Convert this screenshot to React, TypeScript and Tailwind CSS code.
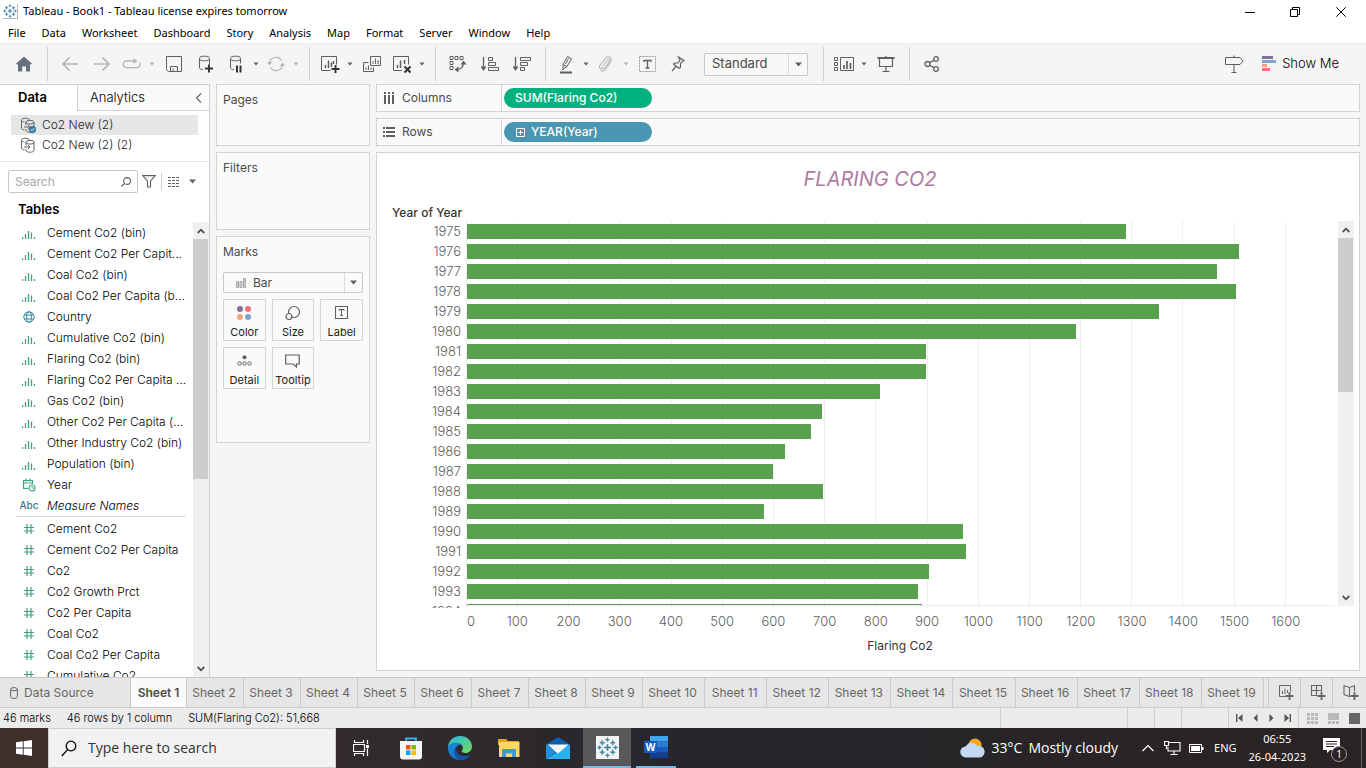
import type { ReactNode } from 'react';

const ui = "font-['Inter','Liberation_Sans',sans-serif]";
const win = "font-['Noto_Sans','Open_Sans',sans-serif]";

const menus = ['File', 'Data', 'Worksheet', 'Dashboard', 'Story', 'Analysis', 'Map', 'Format', 'Server', 'Window', 'Help'];

type FieldKind = 'bin' | 'geo' | 'date' | 'abc' | 'num';

const dimensions: { kind: FieldKind; name: string }[] = [
  { kind: 'bin', name: 'Cement Co2 (bin)' },
  { kind: 'bin', name: 'Cement Co2 Per Capit...' },
  { kind: 'bin', name: 'Coal Co2 (bin)' },
  { kind: 'bin', name: 'Coal Co2 Per Capita (b...' },
  { kind: 'geo', name: 'Country' },
  { kind: 'bin', name: 'Cumulative Co2 (bin)' },
  { kind: 'bin', name: 'Flaring Co2 (bin)' },
  { kind: 'bin', name: 'Flaring Co2 Per Capita ...' },
  { kind: 'bin', name: 'Gas Co2 (bin)' },
  { kind: 'bin', name: 'Other Co2 Per Capita (...' },
  { kind: 'bin', name: 'Other Industry Co2 (bin)' },
  { kind: 'bin', name: 'Population (bin)' },
  { kind: 'date', name: 'Year' },
  { kind: 'abc', name: 'Measure Names' },
];

const measures = ['Cement Co2', 'Cement Co2 Per Capita', 'Co2', 'Co2 Growth Prct', 'Co2 Per Capita', 'Coal Co2', 'Coal Co2 Per Capita', 'Cumulative Co2'];

const AXIS_MAX = 1694;

const flaring = [
  [1975, 1287], [1976, 1508], [1977, 1465], [1978, 1502], [1979, 1352], [1980, 1190], [1981, 897],
  [1982, 897], [1983, 807], [1984, 693], [1985, 672], [1986, 621], [1987, 598], [1988, 695],
  [1989, 580], [1990, 969], [1991, 975], [1992, 902], [1993, 881], [1994, 889],
];

const ticks = Array.from({ length: 16 }, (_, i) => (i + 1) * 100);
const sheets = Array.from({ length: 18 }, (_, i) => i + 2);

function Svg({ w = 20, h = 20, children, className = '' }: { w?: number; h?: number; children: ReactNode; className?: string }) {
  return (
    <svg width={w} height={h} viewBox={`0 0 ${w} ${h}`} fill="none" stroke="currentColor" className={`shrink-0 ${className}`} aria-hidden="true">
      {children}
    </svg>
  );
}

function Tool({ label, wide, off, children }: { label: string; wide?: boolean; off?: boolean; children: ReactNode }) {
  return (
    <button aria-label={label} className={`flex h-8 shrink-0 items-center justify-center ${wide ? 'w-8' : 'w-7'} ${off ? 'text-[#b5b5b5]' : 'text-[#5f5f5f]'}`}>
      {children}
    </button>
  );
}

function Caret({ label, off }: { label: string; off?: boolean }) {
  return (
    <button aria-label={label} className={`flex h-8 w-3 shrink-0 items-center justify-center ${off ? 'text-[#b5b5b5]' : 'text-[#5f5f5f]'}`}>
      <Svg w={6} h={4}><path d="M.5 .5h5L3 3.500z" fill="currentColor" stroke="none" /></Svg>
    </button>
  );
}

function Divider() {
  return <span className="ml-[7px] mr-1.5 h-[34px] w-px shrink-0 bg-[#cfcfcf]" />;
}

function TableauMark({ size }: { size: number }) {
  const plus = (x: number, y: number, r: number, c: string, w: number) => (
    <path key={`${x}-${y}`} d={`M${x - r} ${y}h${2 * r}M${x} ${y - r}v${2 * r}`} stroke={c} strokeWidth={w} />
  );
  return (
    <svg width={size} height={size} viewBox="0 0 24 24" fill="none" className="shrink-0" aria-hidden="true">
      {plus(12, 12, 3.8, '#2f7fa3', 1.8)}
      {plus(6, 6.5, 2.8, '#3f8bad', 1.7)}
      {plus(18, 6.5, 2.8, '#3f8bad', 1.7)}
      {plus(6, 17.5, 2.8, '#3f8bad', 1.7)}
      {plus(18, 17.5, 2.8, '#3f8bad', 1.7)}
      {plus(12, 3, 2.4, '#3f8bad', 1.6)}
      {plus(12, 21, 2.4, '#3f8bad', 1.6)}
      {plus(2.8, 12, 2.4, '#3f8bad', 1.6)}
      {plus(21.2, 12, 2.4, '#3f8bad', 1.6)}
    </svg>
  );
}

function FieldIcon({ kind }: { kind: FieldKind }) {
  if (kind === 'bin')
    return (
      <Svg w={14} h={12} className="text-[#3fa37f]">
        <path d="M.5 10v2M3.500 7v5M6.500 4v8M9.500 5.500V12M12.500 10v2" strokeWidth="1.300" />
      </Svg>
    );
  if (kind === 'geo')
    return (
      <Svg w={12} h={12} className="text-[#3a87a3]">
        <circle cx="6" cy="6" r="5.2" />
        <ellipse cx="6" cy="6" rx="2.400" ry="5.200" />
        <path d="M1.500 4h9M1.500 8h9" />
      </Svg>
    );
  if (kind === 'date')
    return (
      <Svg w={14} h={14} className="text-[#3fa37f]">
        <path d="M6 10.500H1.500V2.500h9V6M1.500 5h9M4 .5v3M8 .5v3" strokeWidth="1.200" />
        <circle cx="10" cy="10" r="3" strokeWidth="1.200" />
        <path d="M10 8.500V10h1.500" />
      </Svg>
    );
  if (kind === 'abc') return <span className="text-[10px] font-medium text-[#3c7a94]">Abc</span>;
  return (
    <Svg w={12} h={12} className="text-[#3fa37f]">
      <path d="M4 1v10M8 1v10M1 4.500h10M1 8h10" strokeWidth="1.200" />
    </Svg>
  );
}

function Field({ kind, name }: { kind: FieldKind; name: string }) {
  return (
    <li className="flex h-[21px] items-center">
      <span className="ml-4 flex w-[26px] justify-center">
        <FieldIcon kind={kind} />
      </span>
      <span className={`ml-[5px] whitespace-nowrap text-xs font-light text-black ${kind === 'abc' ? 'italic' : ''}`}>{name}</span>
    </li>
  );
}

function ScrollBar({ thumb }: { thumb: string }) {
  return (
    <div className="flex w-4 shrink-0 flex-col bg-[#f0f0f0] text-[#505050]">
      <button aria-label="Scroll up" className="flex h-[17px] w-[15px] shrink-0 items-center justify-center">
        <Svg w={8} h={6}><path d="M.7 5 4 1.700 7.300 5" strokeWidth="1.800" /></Svg>
      </button>
      <div className="min-h-0 flex-1">
        <div className={`w-[15px] bg-[#cdcdcd] ${thumb}`} />
      </div>
      <button aria-label="Scroll down" className="flex h-[17px] w-[15px] shrink-0 items-center justify-center">
        <Svg w={8} h={6}><path d="M.7 1 4 4.300 7.300 1" strokeWidth="1.800" /></Svg>
      </button>
    </div>
  );
}

function DataSourceIcon({ active }: { active?: boolean }) {
  return (
    <Svg w={17} h={17} className="text-[#666]">
      <path d="M1.500 3.200v8c0 .8 1.500 1.500 3 1.600M1.500 3.200C1.500 2 3.300 1.200 5.500 1.200s4 .8 4 2M1.500 3.200c0 1 1.500 1.700 3 1.900" />
      <ellipse cx="10" cy="5.200" rx="4" ry="1.900" />
      <path d="M6 5.200v3M6 12v1.300c0 1.100 1.800 1.900 4 1.900s4-.8 4-1.900V5.200M4 10h6M8 8l2 2-2 2" />
      {active && (
        <>
          <circle cx="12.500" cy="12.500" r="3.400" fill="#2f7fa3" stroke="#2f7fa3" strokeWidth=".5" />
          <path d="m10.900 12.500 1.200 1.200 2-2.400" stroke="#fff" strokeWidth=".9" />
        </>
      )}
    </Svg>
  );
}

function TitleBar() {
  return (
    <header className={`bg-white ${win}`}>
      <div className="flex h-[23px] items-center">
        <span className="ml-[3px] flex size-[15px] items-center justify-center border-b border-r border-[#b8b8b8]">
          <TableauMark size={14} />
        </span>
        <h1 className="ml-[5px] flex-1 text-[11px] text-black">Tableau - Book1 - Tableau license expires tomorrow</h1>
        <button aria-label="Minimize" className="flex w-[46px] justify-center text-black"><Svg w={10} h={10}><path d="M0 5.500h10" /></Svg></button>
        <button aria-label="Restore" className="flex w-[44px] justify-center text-black"><Svg w={10} h={10}><path d="M.5 2.500h7v7h-7zM2.500 2.500v-2h7v7h-2" /></Svg></button>
        <button aria-label="Close" className="mr-0.5 flex w-[47px] justify-center text-black"><Svg w={10} h={10}><path d="m.3.3 9.400 9.400M9.700.3.3 9.700" /></Svg></button>
      </div>
      <nav className="flex h-5 items-center gap-4 pl-2 text-[11px] text-black">
        {menus.map((m) => <button key={m}>{m}</button>)}
      </nav>
    </header>
  );
}

function Toolbar() {
  return (
    <div className={`flex h-[41px] items-center border-t border-[#ececec] bg-[#f5f5f5] ${ui}`}>
      <button aria-label="Home" className="flex w-10 shrink-0 justify-center pl-2 text-[#66727f]">
        <Svg w={18} h={16}><path d="M9 .5 17.500 8.300H15V15.500h-4v-5H7.200v5H3V8.300H.5z" fill="currentColor" stroke="none" /></Svg>
      </button>
      <Divider />
      <Tool label="Undo" wide off><Svg w={18} h={16}><path d="M17 8H2M8.500 1.500 2 8l6.500 6.500" strokeWidth="1.700" /></Svg></Tool>
      <Tool label="Redo" wide off><Svg w={18} h={16}><path d="M1 8h15M9.500 1.500 16 8l-6.500 6.500" strokeWidth="1.700" /></Svg></Tool>
      <Tool label="Replay" off><Svg w={20} h={12}><path d="M12.500 3H4.500a3.300 3.300 0 0 0 0 6.600h10.500a3.300 3.300 0 0 0 2.700-5" strokeWidth="1.300" /><path d="m11.500.3 4 2.700-4 2.700z" fill="currentColor" stroke="none" /></Svg></Tool>
      <Caret label="Replay options" off />
      <Tool label="Save" wide><Svg w={16} h={16}><path d="M.5.5h15v15H2.500l-2-2zM4.500 15.500v-5h7v5M7 15.500v-3" /></Svg></Tool>
      <Tool label="New data source" wide>
        <Svg w={16} h={18}><ellipse cx="6.500" cy="3.500" rx="5" ry="2.300" /><path d="M1.500 3.500v9.300c0 1 1.500 1.700 3.500 1.900M11.500 3.500v6" /><path d="M11 9.500v8M7 13.500h8" stroke="#333" strokeWidth="1.900" /></Svg>
      </Tool>
      <Tool label="Pause auto updates">
        <Svg w={16} h={18}><ellipse cx="7.500" cy="3.500" rx="5" ry="2.300" /><path d="M2.500 3.500v9.300c0 1 1.500 1.700 3.500 1.900M12.500 3.500v5" /><path d="M9 10.500v7M12.500 10.500v7" stroke="#333" strokeWidth="2" /></Svg>
      </Tool>
      <Caret label="Pause options" />
      <Tool label="Refresh" off>
        <Svg w={18} h={16}><path d="M2.500 7A6.500 6.500 0 0 1 14.500 4.500M15.500 9A6.500 6.500 0 0 1 3.500 11.500" strokeWidth="1.200" /><path d="M0 6h5L2.500 9.500zM13 10h5l-2.500-3.500z" fill="currentColor" stroke="none" /></Svg>
      </Tool>
      <Caret label="Refresh options" off />
      <Divider />
      <Tool label="New worksheet">
        <Svg w={20} h={19}><path d="M10.500 15.500H1.500V1.500h15v8" /><path d="M5.500 10v3M8.500 5.500V13M11.500 7.500V12M13.500 6v3" strokeWidth="1.500" /><path d="M15.500 10v8M11.500 14h8" stroke="#333" strokeWidth="1.900" /></Svg>
      </Tool>
      <Caret label="New worksheet options" />
      <Tool label="Duplicate" wide>
        <Svg w={18} h={17}><path d="M7.500.5h10v9h-10zM5.500 6.500h-5v9h10v-4" /><path d="M10 5v3M12.500 2.500V8M15 4v4M3 11.500v2.500M5.500 9.500V14M8 11.500V14" /></Svg>
      </Tool>
      <Tool label="Clear sheet">
        <Svg w={20} h={19}><path d="M10 15.500H1.500V1.500h15v8" /><path d="M5.500 10v3M8.500 5.500V13M12.500 5v4" strokeWidth="1.500" /><path d="m12.500 11.500 6 6M18.500 11.500l-6 6" stroke="#333" strokeWidth="2" /></Svg>
      </Tool>
      <Caret label="Clear options" />
      <Divider />
      <Tool label="Swap rows and columns" wide>
        <Svg w={18} h={18}><path d="M1 1.500h3v3H1zM6 1.500h3v3H6zM11 1.500h3v3h-3zM1 6.500h3v3H1zM1 11.500h3v3H1z" /><path d="M7.500 14.500c4.500 0 7-2.500 7-7" strokeWidth="1.200" /><path d="m9.500 11.500-4 3 4 3zM11.500 9.500l3-4 3 4z" fill="currentColor" stroke="none" /></Svg>
      </Tool>
      <Tool label="Sort ascending" wide>
        <Svg w={20} h={16}><path d="M3.500 1v12" strokeWidth="1.300" /><path d="M.5 10.500h6l-3 4.500z" fill="currentColor" stroke="none" /><path d="M8.500 1.500h4v3h-4zM8.500 6.500h7v3h-7zM8.500 11.500h10v3h-10z" /></Svg>
      </Tool>
      <Tool label="Sort descending" wide>
        <Svg w={20} h={16}><path d="M3.500 1v12" strokeWidth="1.300" /><path d="M.5 10.500h6l-3 4.500z" fill="currentColor" stroke="none" /><path d="M8.500 1.500h10v3h-10zM8.500 6.500h7v3h-7zM8.500 11.500h4v3h-4z" /></Svg>
      </Tool>
      <Divider />
      <Tool label="Highlight">
        <Svg w={14} h={19}><path d="M4 9.500 8.500 1.500l4 2.200L8 11.500 4.200 14zM4 9.500l4 2M4.500 14 3 15M6.500 9l3-5.500" /><path d="M1 17.500h12" strokeWidth="2" /></Svg>
      </Tool>
      <Caret label="Highlight options" />
      <Tool label="Group members" off>
        <Svg w={14} h={16}><path d="M4 10 8.300 4c1-1.300 2.800-.2 2 1.300L5.800 12c-1.200 1.500-3 .3-2.200-1.300M3.200 12.500c-2.500 1-3.500-1.500-2-3.500L6.500 2.300c2-2.700 7-1.300 5.500 2.500l-4.500 7.500c-1.500 2.500-4.500 3.500-6 1.500" strokeWidth="1.100" /></Svg>
      </Tool>
      <Caret label="Group options" off />
      <Tool label="Show mark labels" wide>
        <Svg w={18} h={16}><path d="M.5.5h16v15H.5z" strokeDasharray="2 1" stroke="#999" /><path d="M5 6V4.500h7V6M8.500 4.500v7.500M6.500 12h4" strokeWidth="1.300" /></Svg>
      </Tool>
      <Tool label="Fix axes">
        <Svg w={14} h={16}><path d="m7.500 1 5.500 3.500-1.500.5L9.500 8v3.500l-1.500.8L2.500 8 4 7h3l2-3zM5 10.500 1 15" strokeWidth="1.200" /></Svg>
      </Tool>
      <div className="ml-3 flex h-[23px] w-[104px] shrink-0 items-center rounded-xs border border-[#c9c9c9] bg-[#f7f7f7] text-[#5f5f5f]">
        <select aria-label="Fit" className="h-full min-w-0 flex-1 appearance-none pl-[7px] text-[13px] text-[#4a4a4a] outline-none">
          <option>Standard</option>
        </select>
        <span className="flex h-full w-[19px] items-center justify-center border-l border-[#dcdcdc]">
          <Svg w={7} h={5}><path d="M0 .5h7L3.500 4.500z" fill="currentColor" stroke="none" /></Svg>
        </span>
      </div>
      <span className="w-2 shrink-0" />
      <Divider />
      <Tool label="Show or hide cards">
        <Svg w={20} h={15}><path d="M.5.5h3v3h-3zM.5 5.500h3v3h-3zM.5 10.500h3v3h-3zM6.500.5h13v13h-13z" /><path d="M10 8v4M13 4v8M16.500 6v6" strokeWidth="1.700" /></Svg>
      </Tool>
      <Caret label="Card options" />
      <Tool label="Presentation mode" wide>
        <Svg w={18} h={16}><path d="M.5 2h17" strokeWidth="2" /><path d="M2.500 2v8.500h13V2M9 0v1M9 10.500v5M5.500 15.500h7" strokeWidth="1.200" /></Svg>
      </Tool>
      <Divider />
      <Tool label="Share" wide>
        <Svg w={16} h={16}><circle cx="3.500" cy="8" r="2.500" strokeWidth="1.300" /><circle cx="12" cy="3" r="2.300" strokeWidth="1.300" /><circle cx="12" cy="13" r="2.300" strokeWidth="1.300" /><path d="m5.700 6.700 4.300-2.600M5.700 9.300l4.300 2.600" strokeWidth="1.300" /></Svg>
      </Tool>
      <span className="flex-1" />
      <Tool label="Guide"><Svg w={19} h={18}><path d="M.5 2.500h14.500l3 3.500-3 3.500H.5zM9 .5v2M9 9.500v8M6.500 17.500h5" /></Svg></Tool>
      <button className="mr-[27px] ml-3.5 flex shrink-0 items-center gap-1.5 text-[13px] font-light text-black">
        <Svg w={14} h={16}><g stroke="none"><path d="M0 0h11v3H0z" fill="#85719a" /><path d="M0 4h14v3H0z" fill="#7da2cc" /><path d="M0 8h5v3H0z" fill="#f2a57c" /><path d="M0 12h8v3H0z" fill="#f8707f" /></g></Svg>
        Show Me
      </button>
    </div>
  );
}

function DataPane() {
  return (
    <aside className="flex w-[210px] shrink-0 flex-col border-r border-t border-[#cfcfcf] bg-white">
      <div className="flex h-[26px] shrink-0 text-[13px]">
        <button className="w-[77px] pr-3 font-semibold text-black">Data</button>
        <div className="flex flex-1 items-center justify-between border-b border-l border-[#d0d0d0] bg-[#fafafa] pl-3 pr-1.5">
          <button className="font-light text-black">Analytics</button>
          <button aria-label="Collapse pane" className="text-[#666]"><Svg w={8} h={10}><path d="M6 .5 1.500 5 6 9.500" strokeWidth="1.200" /></Svg></button>
        </div>
      </div>
      <ul className="h-[51px] shrink-0 border-b border-[#e2e2e2] pt-1 text-xs font-light text-[#222]">
        <li className="ml-[11px] mr-[11px] flex h-5 items-center gap-[5px] bg-[#e6e6e6] pl-[9px]"><DataSourceIcon active />Co2 New (2)</li>
        <li className="ml-[11px] mr-[11px] flex h-5 items-center gap-[5px] pl-[9px]"><DataSourceIcon />Co2 New (2) (2)</li>
      </ul>
      <div className="mt-2 flex h-[23px] shrink-0 items-center pl-2 text-[#5f5f5f]">
        <label className="flex h-full w-[130px] items-center rounded-xs border border-[#c9c9c9] pl-1.5 pr-1.5">
          <input aria-label="Search fields" placeholder="Search" className="min-w-0 flex-1 text-xs outline-none placeholder:text-[#a8a8a8]" />
          <Svg w={10} h={10}><circle cx="6" cy="4" r="3.400" strokeWidth="1.100" /><path d="M3.500 6.500.5 9.500" strokeWidth="1.200" /></Svg>
        </label>
        <button aria-label="Filter fields" className="ml-1"><Svg w={14} h={13}><path d="M.8.6h12.400L8.500 6.200V12h-3V6.200z" strokeWidth="1.100" /></Svg></button>
        <span className="ml-[5px] h-[18px] w-px bg-[#d0d0d0]" />
        <button aria-label="View fields as list" className="ml-1.5"><Svg w={12} h={10}><path d="M0 .5h12M0 3.500h12M0 6.500h12M0 9.500h12" strokeDasharray="3 1" /></Svg></button>
        <button aria-label="Field options" className="ml-[9px]"><Svg w={7} h={5}><path d="M0 .5h7L3.500 4.500z" fill="currentColor" stroke="none" /></Svg></button>
      </div>
      <h2 className="flex h-[29px] shrink-0 items-center pl-[18px] pt-1 text-[13px] font-semibold text-black">Tables</h2>
      <div className="flex min-h-0 flex-1">
        <div className="min-w-0 flex-1 overflow-hidden">
          <ul>{dimensions.map((d) => <Field key={d.name} {...d} />)}</ul>
          <hr className="ml-4 mr-[7px] border-[#d9d9d9]" />
          <ul className="pt-px">{measures.map((m) => <Field key={m} kind="num" name={m} />)}</ul>
        </div>
        <ScrollBar thumb="h-[57%]" />
      </div>
    </aside>
  );
}

function MarkButton({ label, children }: { label: string; children: ReactNode }) {
  return (
    <button className="flex h-[42px] flex-col items-center justify-end gap-px border border-[#d4d4d4] text-[11px] text-[#222]">
      <span className="flex h-[23px] items-center text-[#5f5f5f]">{children}</span>
      {label}
    </button>
  );
}

function Cards() {
  const card = 'border border-[#d4d4d4] bg-[#fafafa] px-1.5 text-xs text-[#4b4b4b]';
  return (
    <div className="flex w-[154px] shrink-0 flex-col gap-1.5">
      <section className={`h-[62px] pt-[7px] ${card}`}><h3>Pages</h3></section>
      <section className={`h-[78px] pt-[7px] ${card}`}><h3>Filters</h3></section>
      <section className={`h-[207px] pt-[7px] ${card}`}>
        <h3>Marks</h3>
        <div className="mt-3 flex h-[21px] items-center rounded-xs border border-[#c9c9c9] pl-3">
          <Svg w={10} h={10} className="text-[#a9a9a9]"><path d="M.5 3.500h2v6h-2zM4 3.500h2v6H4zM7.500.5h2v9h-2z" fill="#d0d0d0" /></Svg>
          <select aria-label="Mark type" className="h-full min-w-0 flex-1 appearance-none pl-[7px] text-xs outline-none"><option>Bar</option></select>
          <span className="flex h-full w-[18px] items-center justify-center border-l border-[#dcdcdc] text-[#5f5f5f]"><Svg w={7} h={5}><path d="M0 .5h7L3.500 4.500z" fill="currentColor" stroke="none" /></Svg></span>
        </div>
        <div className="mt-1.5 grid grid-cols-3 gap-x-1.5 gap-y-1.5">
          <MarkButton label="Color"><Svg w={16} h={16}><g stroke="none"><circle cx="4" cy="4" r="3" fill="#85719a" /><circle cx="12" cy="4" r="3" fill="#f8707f" /><circle cx="4" cy="12" r="3" fill="#f2a57c" /><circle cx="12" cy="12" r="3" fill="#7da2cc" /></g></Svg></MarkButton>
          <MarkButton label="Size"><Svg w={16} h={16}><circle cx="9" cy="7" r="5.500" strokeWidth="1.200" /><circle cx="4" cy="11.500" r="3" fill="#fafafa" strokeWidth="1.200" /></Svg></MarkButton>
          <MarkButton label="Label"><Svg w={14} h={13}><path d="M.5.5h12v12H.5z" strokeWidth="1.100" /><path d="M4 5V3.500h5V5M6.500 3.500v6M5 9.500h3" /></Svg></MarkButton>
          <MarkButton label="Detail"><Svg w={15} h={11}><circle cx="7.500" cy="2.200" r="2" fill="currentColor" stroke="none" /><circle cx="2.500" cy="8.500" r="1.700" /><circle cx="7.500" cy="8.500" r="1.700" /><circle cx="12.500" cy="8.500" r="1.700" /></Svg></MarkButton>
          <MarkButton label="Tooltip"><Svg w={15} h={14}><path d="M.7 1h13.500v9H11.500v3L8 10H.7z" strokeWidth="1.200" /></Svg></MarkButton>
        </div>
      </section>
    </div>
  );
}

function Shelf({ title, icon, children }: { title: string; icon: ReactNode; children: ReactNode }) {
  return (
    <div className="flex h-7 shrink-0 items-center border border-[#d4d4d4] bg-[#fafafa]">
      <div className="flex h-full w-[125px] shrink-0 items-center gap-[7px] border-r border-[#d4d4d4] pl-1.5 text-xs text-[#4b4b4b]">{icon}<h3>{title}</h3></div>
      {children}
    </div>
  );
}

function Chart() {
  const cell = { width: `${(100 / AXIS_MAX) * 100}%` };
  return (
    <section className="flex min-h-0 flex-1 flex-col border border-[#d4d4d4] bg-white pl-[15px] pr-[5px]">
      <h2 className="mt-3 mr-3 ml-1.5 text-center text-xl leading-[28px] text-[#b07aa1] italic">FLARING CO2</h2>
      <h3 className="mt-3 flex h-4 items-center text-xs font-medium text-[#333]">Year of Year</h3>
      <div className="flex min-h-0 flex-1">
        <div className="-mb-0.5 w-[70px] shrink-0 overflow-hidden text-right text-[13px] font-light text-[#5c5c5c]">
          {flaring.map(([year]) => <div key={year} className="h-5 pr-px leading-[21px]">{year}</div>)}
        </div>
        <div className="relative ml-1 mr-1 min-w-0 flex-1 overflow-hidden border-b border-l border-[#ececec]">
          <div className="absolute inset-0 flex">
            {ticks.map((t) => <span key={t} style={cell} className="shrink-0 border-r border-[#f0f0f0]" />)}
          </div>
          <div className="relative">
            {flaring.map(([year, v]) => (
              <div key={year} className="h-5 pt-[3px]">
                <div className="h-[15px] bg-[#59a14f]" style={{ width: `${(v / AXIS_MAX) * 100}%` }} />
              </div>
            ))}
          </div>
        </div>
        <ScrollBar thumb="h-[44%]" />
      </div>
      <div className="mr-5 ml-[74px] flex h-1 shrink-0 overflow-hidden border-l border-[#ececec]">
        {ticks.map((t) => <span key={t} style={cell} className="shrink-0 border-r border-[#f0f0f0]" />)}
      </div>
      <div className="mr-5 ml-[74px] flex h-6 shrink-0 items-center overflow-hidden text-[13px] font-light text-[#5c5c5c]">
        <span style={{ width: `${(50 / AXIS_MAX) * 100}%` }} className="shrink-0 pl-px">0</span>
        {ticks.map((t) => <span key={t} style={cell} className="shrink-0 text-center">{t}</span>)}
      </div>
      <p className="mr-5 ml-[74px] h-9 shrink-0 pt-1 text-center text-xs text-[#333]">Flaring Co2</p>
    </section>
  );
}

function Workspace() {
  return (
    <main className={`flex min-h-0 flex-1 bg-[#f5f5f5] ${ui}`}>
      <DataPane />
      <div className="flex min-w-0 flex-1 gap-1.5 pb-1.5 pl-1.5 pr-1.5">
        <Cards />
        <div className="flex min-w-0 flex-1 flex-col gap-1.5">
          <Shelf title="Columns" icon={<Svg w={12} h={12} className="text-[#5f5f5f]"><path d="M2 0v2M2 3v9M6 0v2M6 3v9M10 0v2M10 3v9" strokeWidth="2" /></Svg>}>
            <button className="ml-0.5 h-5 w-[148px] rounded-full bg-[#00b180] pl-[11px] text-left text-xs font-medium text-white">SUM(Flaring Co2)</button>
          </Shelf>
          <Shelf title="Rows" icon={<Svg w={12} h={12} className="text-[#5f5f5f]"><path d="M0 2h2M3 2h9M0 6h2M3 6h9M0 10h2M3 10h9" strokeWidth="2" /></Svg>}>
            <button className="ml-0.5 flex h-5 w-[148px] items-center gap-1.5 rounded-full bg-[#4996b2] pl-3 text-xs font-medium text-white">
              <Svg w={9} h={9}><path d="M.5.5h8v8h-8zM2 4.500h5M4.500 2v5" /></Svg>YEAR(Year)
            </button>
          </Shelf>
          <Chart />
        </div>
      </div>
    </main>
  );
}

function SheetTabs() {
  return (
    <nav className={`flex h-[31px] shrink-0 border-b border-t border-[#c9c9c9] bg-[#e6e6e6] text-xs text-[#666] ${ui}`}>
      <button className="flex w-[131px] shrink-0 items-center gap-1.5 border-r border-[#c9c9c9] pl-2.5">
        <Svg w={8} h={12}><ellipse cx="4" cy="2.200" rx="3.400" ry="1.600" /><path d="M.6 2.200v7.500c0 1 1.500 1.700 3.400 1.700s3.400-.7 3.400-1.700V2.200" /></Svg>
        Data Source
      </button>
      <button className="w-14 shrink-0 border-r border-[#c9c9c9] bg-[#fafafa] font-semibold text-[#4b4b4b]">Sheet 1</button>
      {sheets.map((n) => (
        <button key={n} className={`whitespace-nowrap border-r border-[#c9c9c9] pr-0.5 ${n < 10 ? 'w-[57px] shrink-0' : 'min-w-0 grow basis-[60px]'}`}>Sheet {n}</button>
      ))}
      <span className="w-[5px] shrink-0 border-r border-[#c9c9c9]" />
      <button aria-label="New worksheet" className="flex w-8 shrink-0 items-center justify-center border-r border-[#c9c9c9] pl-1">
        <Svg w={16} h={15}><path d="M7.500 11.500h-6v-11h11v6" /><path d="M4.500 6v3M7 3.500V9M9.500 5v3" /><path d="M11.500 7v8M7.500 11h8" strokeWidth="1.800" /></Svg>
      </button>
      <button aria-label="New dashboard" className="flex w-8 shrink-0 items-center justify-center border-r border-[#c9c9c9] pl-1">
        <Svg w={16} h={15}><path d="M7.500 10.500h-6v-10h10v6M6.500.5v10M1.500 5.500h10" strokeWidth="1.100" /><path d="M11.500 7v8M7.500 11h8" strokeWidth="1.800" /></Svg>
      </button>
      <button aria-label="New story" className="flex w-[33px] shrink-0 items-center justify-center pl-1">
        <Svg w={16} h={15}><path d="M11.500 6V.8L6.500 2.500 1 .8V9.500l5.500 2V2.500" strokeWidth="1.100" /><path d="M11.500 7v8M7.500 11h8" strokeWidth="1.800" /></Svg>
      </button>
    </nav>
  );
}

function StatusBar() {
  const nav = 'flex w-4 items-center justify-center';
  return (
    <div className={`flex h-5 shrink-0 items-center bg-[#ebebeb] pl-[3px] text-[11px] font-light text-black ${ui}`}>
      <span>46 marks</span>
      <span className="ml-4">46 rows by 1 column</span>
      <span className="ml-4 flex-1">SUM(Flaring Co2): 51,668</span>
      <span className="h-full w-[127px] border-l border-[#cfcfcf]" />
      <span className="h-full w-[27px] border-l border-[#cfcfcf]" />
      <span className="h-full w-[27px] border-l border-[#cfcfcf]" />
      <span className="h-full w-[47px] border-l border-[#cfcfcf]" />
      <div className="flex h-full w-[70px] border-l border-[#cfcfcf] pl-0.5 text-[#555]">
        <button aria-label="First sheet" className={nav}><Svg w={7} h={8}><path d="M.7 0v8" strokeWidth="1.400" /><path d="M6.500 0v8L2 4z" fill="currentColor" stroke="none" /></Svg></button>
        <button aria-label="Previous sheet" className={nav}><Svg w={5} h={8}><path d="M4.500 0v8L.5 4z" fill="currentColor" stroke="none" /></Svg></button>
        <button aria-label="Next sheet" className={nav}><Svg w={5} h={8}><path d="M.5 0v8l4-4z" fill="currentColor" stroke="none" /></Svg></button>
        <button aria-label="Last sheet" className={nav}><Svg w={7} h={8}><path d="M6.300 0v8" strokeWidth="1.400" /><path d="M.5 0v8L5 4z" fill="currentColor" stroke="none" /></Svg></button>
      </div>
      <div className="flex h-full items-center gap-2.5 border-l border-[#cfcfcf] pl-2 pr-1.5">
        <button aria-label="Show sheet sorter"><Svg w={11} h={11} className="text-[#bababa]"><path d="M0 1.500h11M0 5.500h11M0 9.500h11" strokeWidth="3" strokeDasharray="3 1" /></Svg></button>
        <button aria-label="Show filmstrip"><Svg w={11} h={11} className="text-[#bababa]"><path d="M0 3.500h11" strokeWidth="7" /><path d="M0 9.500h11" strokeWidth="3" strokeDasharray="3 1" /></Svg></button>
        <button aria-label="Show tabs"><Svg w={11} h={11} className="text-[#666]"><path d="M0 5.500h11" strokeWidth="11" /></Svg></button>
      </div>
    </div>
  );
}

function TaskApp({ label, children }: { label: string; children: ReactNode }) {
  return <button aria-label={label} className="flex h-full w-[49px] shrink-0 items-center justify-center">{children}</button>;
}

function Taskbar() {
  return (
    <footer className={`flex h-10 shrink-0 items-center bg-linear-to-r from-[#40302b] via-[#26262c] to-[#2a2323] text-white ${win}`}>
      <button aria-label="Start" className="flex w-12 shrink-0 justify-center">
        <Svg w={16} h={16}><path d="M0 2.300 6.800 1.300v6.200H0zM7.700 1.200 16 0v7.500H7.700zM0 8.400h6.800v6.300L0 13.700zM7.700 8.400H16V16l-8.300-1.200z" fill="currentColor" stroke="none" /></Svg>
      </button>
      <label className="mr-px flex h-full w-72 shrink-0 items-center gap-[11px] border border-[#cfcfcf] bg-[#f2f2f2] pl-3 text-black">
        <Svg w={16} h={17}><circle cx="10" cy="6" r="4.800" strokeWidth="1.300" /><path d="M6.600 9.600.8 16" strokeWidth="1.300" /></Svg>
        <input aria-label="Type here to search" placeholder="Type here to search" className="min-w-0 flex-1 font-['Open_Sans','Noto_Sans',sans-serif] text-sm outline-none placeholder:text-[#333]" />
      </label>
      <TaskApp label="Task view">
        <Svg w={18} h={16}><path d="M.5 4.500h11v7H.5zM1.500 0v2.500h9V0M1.500 16v-2.500h9V16M14.500 0v4M14.500 8.500v7.500" strokeWidth="1.200" /><path d="M13 5h3v3h-3z" fill="currentColor" stroke="none" /></Svg>
      </TaskApp>
      <TaskApp label="Microsoft Store">
        <Svg w={24} h={24}><path d="M7 7V2.500h10V7" stroke="#2fb2f0" strokeWidth="1.800" /><path d="M1 5h22v15.500a3 3 0 0 1-3 3H4a3 3 0 0 1-3-3z" fill="#f5f5f5" stroke="none" /><g stroke="none"><path d="M7 9h4.500v4.500H7z" fill="#f25022" /><path d="M12.500 9H17v4.500h-4.500z" fill="#7fba00" /><path d="M7 14.500h4.500V19H7z" fill="#00a4ef" /><path d="M12.500 14.500H17V19h-4.500z" fill="#ffb900" /></g></Svg>
      </TaskApp>
      <TaskApp label="Microsoft Edge">
        <Svg w={24} h={24}>
          <defs>
            <linearGradient id="edgeTop" x1="0" y1="0" x2="1" y2="1"><stop offset="0" stopColor="#29b9e8" /><stop offset="1" stopColor="#6fdc55" /></linearGradient>
            <linearGradient id="edgeLow" x1="0" y1="0" x2="0" y2="1"><stop offset="0" stopColor="#1b87c9" /><stop offset="1" stopColor="#1479d4" /></linearGradient>
          </defs>
          <g stroke="none">
            <path d="M0 12C0 5 5 0 12 0s12 5 12 10.500c0 4-3 6.500-6.500 6.500-3 0-4.500-1.300-3.500-2.500 2.500-4-1-7.500-5-7.500C4.500 7 1 9 0 12z" fill="url(#edgeTop)" />
            <path d="M0 12c.5-3.500 4-5.500 8-5.500 2.500 0 4.500 1 5.500 2.500-4-1-5.500 2-5.500 4.500 0 5 5.500 7.500 11 6.500 1.500-.3 2.500-.8 3-.8C20 22 16.500 24 12 24 5 24 0 18.500 0 12z" fill="url(#edgeLow)" />
            <path d="M8 13.500c0 5 5.500 7.500 11 6.500l3-.8C20 22 16.500 24 12 24c-3.500-1-6-4-6-8 0-4 2.500-7 7.500-7-4-1-5.500 2-5.500 4.500z" fill="#0f54a5" />
          </g>
        </Svg>
      </TaskApp>
      <TaskApp label="File Explorer">
        <Svg w={22} h={20}><g stroke="none"><path d="M0 1h8l2 2h11v4H0z" fill="#e8a317" /><path d="M1 4h20.500v15H1z" fill="#ffd763" /><path d="M4 19v-7a1 1 0 0 1 1-1h12a1 1 0 0 1 1 1v7h-4v-3.500H8V19z" fill="#3f98d8" /></g></Svg>
      </TaskApp>
      <TaskApp label="Mail">
        <Svg w={24} h={24}><g stroke="none"><path d="M0 8.500 12 1l12 7.500V23H0z" fill="#0f5fae" /><path d="M1.500 8.500h21L12 18z" fill="#f4f6f8" /><path d="M0 8.500 9.500 16 0 23z" fill="#1d94dc" /><path d="M24 8.500V23H0z" fill="#2ab0ec" /><path d="M22.500 8.500 12 17.500 9.500 15z" fill="#f4f6f8" /></g></Svg>
      </TaskApp>
      <button aria-label="Tableau" className="ml-px flex h-full w-12 shrink-0 items-center justify-center border-b-2 border-[#76b9ed] bg-[#59575a]">
        <span className="flex size-[23px] items-center justify-center bg-[#f3f3f3]"><TableauMark size={21} /></span>
      </button>
      <button aria-label="Word" className="ml-[5px] flex h-full w-10 shrink-0 items-center justify-center border-b-2 border-[#76b9ed]">
        <span className="relative">
          <Svg w={24} h={22}><g stroke="none"><path d="M6 0h18v5.500H6z" fill="#41a5ee" /><path d="M6 5.500h18V11H6z" fill="#2b7cd3" /><path d="M6 11h18v5.500H6z" fill="#185abd" /><path d="M6 16.500h18V22H6z" fill="#103f91" /><path d="M0 5h13v12H0z" fill="#185abd" /></g></Svg>
          <span className="absolute top-[5px] left-0 w-[13px] text-center text-[10px] leading-3 font-bold">W</span>
        </span>
      </button>
      <span className="flex-1" />
      <button className="flex shrink-0 items-center gap-1.5 font-['Open_Sans','Noto_Sans',sans-serif] text-sm">
        <Svg w={26} h={20}><g stroke="none"><circle cx="15" cy="7" r="6.500" fill="#f6a623" /><path d="M6 19.500a5.500 5.500 0 0 1-.5-11 7 7 0 0 1 12-.5 5.800 5.800 0 0 1 2.500 11.500z" fill="#c3d8f3" /></g></Svg>
        <span>33°C</span><span>Mostly cloudy</span>
      </button>
      <button aria-label="Show hidden icons" className="ml-6 shrink-0"><Svg w={12} h={8}><path d="M.5 7 6 1.500 11.500 7" strokeWidth="1.200" /></Svg></button>
      <button aria-label="Network" className="ml-2.5 shrink-0"><Svg w={17} h={14}><path d="M5 1.500h11v8.500H4V6M10 10v3M6.500 13.500h7M.5.5h4v4h-4zM2.500 4.500V8" strokeWidth="1.100" /></Svg></button>
      <button aria-label="Battery" className="ml-2 shrink-0"><Svg w={15} h={9}><path d="M.5.5h12v8H.5z" /><path d="M2 2h9v5H2zM13 3h1.500v3H13z" fill="currentColor" stroke="none" /></Svg></button>
      <button className="ml-2.5 shrink-0 text-[11px]">ENG</button>
      <time className="ml-3 shrink-0 text-center text-[11px] leading-[18px]">06:55<br />26-04-2023</time>
      <button aria-label="Notifications" className="mr-2.5 ml-[17px] shrink-0">
        <span className="relative flex size-7 items-start pt-1">
          <Svg w={17} h={15}><path d="M0 0h17v12H7l-3 3v-3H0z" fill="currentColor" stroke="none" /><path d="M3 3.500h11M3 6h11M3 8.500h8" stroke="#2a2323" /></Svg>
          <span className="absolute top-3 left-2 flex size-4 items-center justify-center rounded-full border border-[#999] bg-[#2a2323] text-[10px]">1</span>
        </span>
      </button>
      <span className="mr-1 h-full w-px bg-[#6b6666]" />
    </footer>
  );
}

export default function App() {
  return (
    <div className="flex h-screen flex-col overflow-hidden">
      <TitleBar />
      <Toolbar />
      <Workspace />
      <SheetTabs />
      <StatusBar />
      <Taskbar />
    </div>
  );
}
